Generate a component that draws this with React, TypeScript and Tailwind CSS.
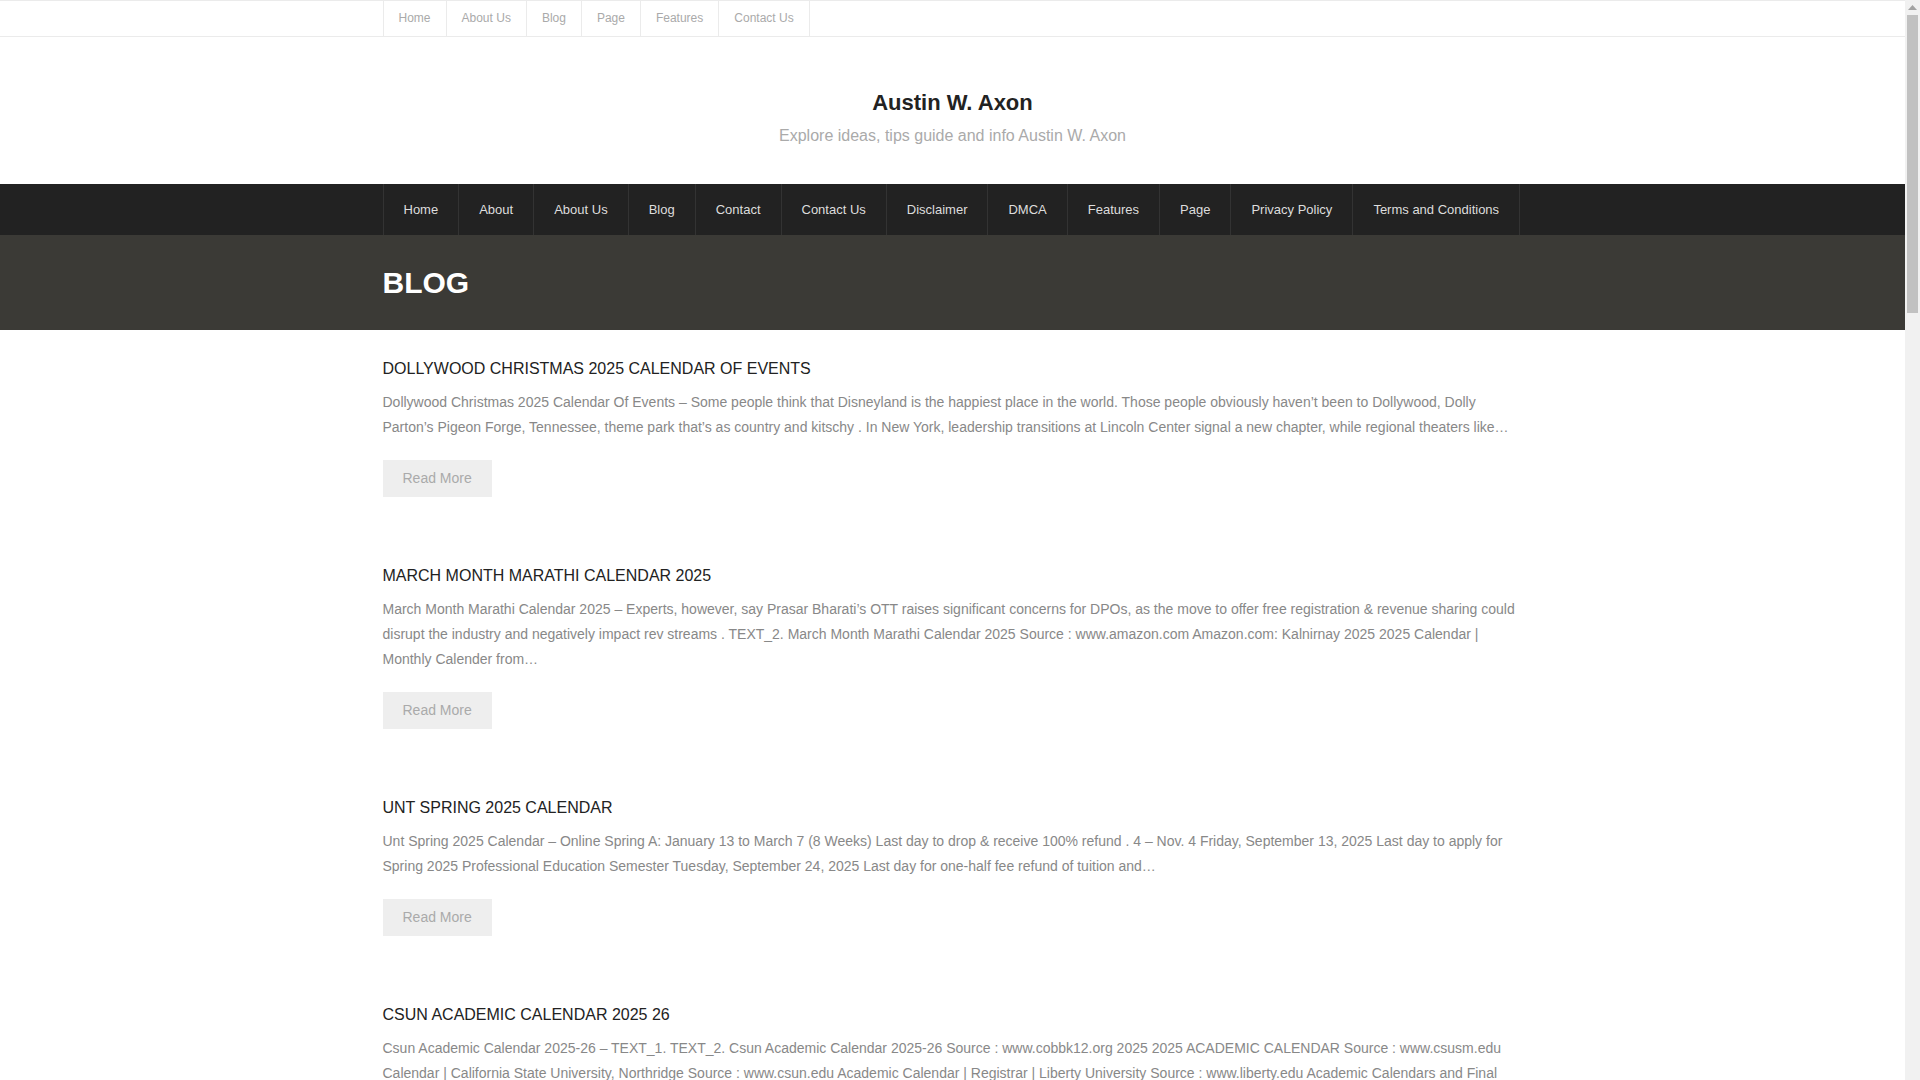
const topLinks = ['Home', 'About Us', 'Blog', 'Page', 'Features', 'Contact Us'];

const mainLinks = [
  'Home',
  'About',
  'About Us',
  'Blog',
  'Contact',
  'Contact Us',
  'Disclaimer',
  'DMCA',
  'Features',
  'Page',
  'Privacy Policy',
  'Terms and Conditions',
];

const posts = [
  {
    title: 'Dollywood Christmas 2025 Calendar Of Events',
    excerpt:
      'Dollywood Christmas 2025 Calendar Of Events – Some people think that Disneyland is the happiest place in the world. Those people obviously haven’t been to Dollywood, Dolly Parton’s Pigeon Forge, Tennessee, theme park that’s as country and kitschy . In New York, leadership transitions at Lincoln Center signal a new chapter, while regional theaters like…',
  },
  {
    title: 'March Month Marathi Calendar 2025',
    excerpt:
      'March Month Marathi Calendar 2025 – Experts, however, say Prasar Bharati’s OTT raises significant concerns for DPOs, as the move to offer free registration & revenue sharing could disrupt the industry and negatively impact rev streams . TEXT_2. March Month Marathi Calendar 2025 Source : www.amazon.com Amazon.com: Kalnirnay 2025 2025 Calendar | Monthly Calender from…',
  },
  {
    title: 'Unt Spring 2025 Calendar',
    excerpt:
      'Unt Spring 2025 Calendar – Online Spring A: January 13 to March 7 (8 Weeks) Last day to drop & receive 100% refund . 4 – Nov. 4 Friday, September 13, 2025 Last day to apply for Spring 2025 Professional Education Semester Tuesday, September 24, 2025 Last day for one-half fee refund of tuition and…',
  },
  {
    title: 'Csun Academic Calendar 2025 26',
    excerpt:
      'Csun Academic Calendar 2025-26 – TEXT_1. TEXT_2. Csun Academic Calendar 2025-26 Source : www.cobbk12.org 2025 2025 ACADEMIC CALENDAR Source : www.csusm.edu Calendar | California State University, Northridge Source : www.csun.edu Academic Calendar | Registrar | Liberty University Source : www.liberty.edu Academic Calendars and Final Exam Schedules…',
  },
];

function Scrollbar() {
  return (
    <div className="sticky top-0 h-screen w-[15px] shrink-0 bg-[#f1f1f1] flex flex-col items-center">
      <svg className="mt-[5px] w-[9px] h-[5px]" viewBox="0 0 9 5">
        <path d="M4.5 0L9 5H0z" fill="#a3a3a3" />
      </svg>
      <div className="mt-[5px] w-[11px] h-[298px] bg-[#c1c1c1]" />
    </div>
  );
}

export default function App() {
  return (
    <div className="flex bg-white font-['Liberation_Sans',Arial,sans-serif]">
      <div className="flex-1 min-w-0">
        {/* Top bar */}
        <div className="border-y border-[#ebebeb]">
          <div className="w-[1140px] mx-auto">
            <ul className="flex">
              {topLinks.map((link, i) => (
                <li
                  key={link}
                  className={`border-l border-[#ebebeb] px-[15px] leading-[35px] text-[12px] text-[#aaa] ${
                    i === topLinks.length - 1 ? 'border-r' : ''
                  }`}
                >
                  {link}
                </li>
              ))}
            </ul>
          </div>
        </div>

        {/* Site header */}
        <div className="pt-[51px] pb-[36px] text-center">
          <h1 className="text-[22px] leading-[30px] font-bold text-[#222]">Austin W. Axon</h1>
          <p className="mt-[6px] text-[16px] leading-[24px] text-[#aaa]">
            Explore ideas, tips guide and info Austin W. Axon
          </p>
        </div>

        {/* Main nav */}
        <div className="bg-[#222]">
          <div className="w-[1140px] mx-auto">
            <ul className="flex">
              {mainLinks.map((link, i) => (
                <li
                  key={link}
                  className={`border-l border-[#333] px-5 leading-[51px] text-[13px] text-[#ddd] ${
                    i === mainLinks.length - 1 ? 'border-r' : ''
                  }`}
                >
                  {link}
                </li>
              ))}
            </ul>
          </div>
        </div>

        {/* Page banner */}
        <div className="bg-[#3b3a36] h-[95px] flex items-center">
          <div className="w-[1140px] mx-auto">
            <h2 className="text-[30px] leading-none font-bold text-white uppercase">Blog</h2>
          </div>
        </div>

        {/* Posts */}
        <div className="w-[1140px] mx-auto pt-[28px] pb-10">
          {posts.map((post) => (
            <article key={post.title} className="mb-[68px]">
              <h3 className="text-[16px] leading-[22px] text-[#222] uppercase">{post.title}</h3>
              <p className="mt-[10px] text-[14px] leading-[25px] text-[#888]">{post.excerpt}</p>
              <button className="mt-[20px] h-[37px] px-5 bg-[#eee] text-[14px] text-[#aaa]">
                Read More
              </button>
            </article>
          ))}
        </div>
      </div>
      <Scrollbar />
    </div>
  );
}
